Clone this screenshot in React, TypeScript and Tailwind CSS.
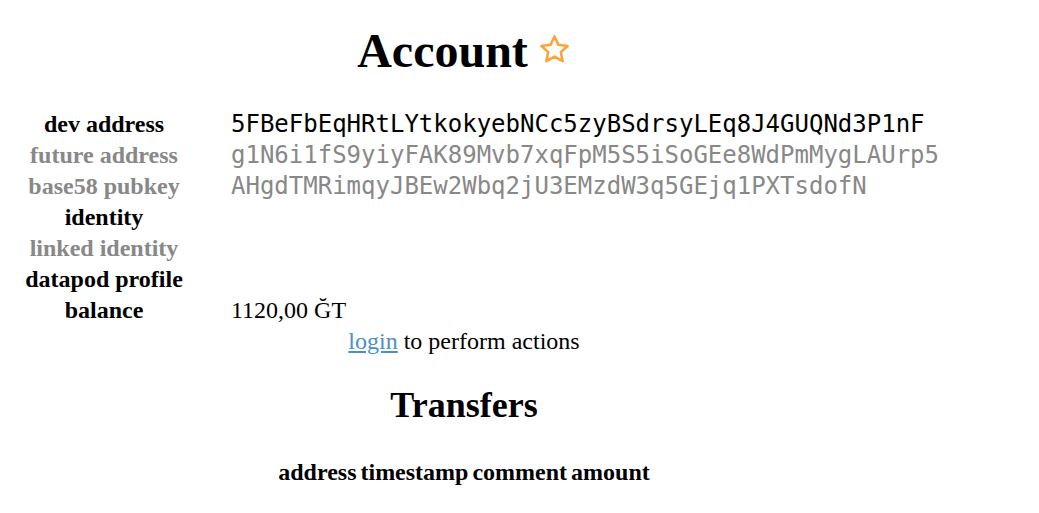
import React from "react";

const rows: { label: string; value?: string; muted?: boolean; mono?: boolean }[] = [
  { label: "dev address", value: "5FBeFbEqHRtLYtkokyebNCc5zyBSdrsyLEq8J4GUQNd3P1nF", mono: true },
  { label: "future address", value: "g1N6i1fS9yiyFAK89Mvb7xqFpM5S5iSoGEe8WdPmMygLAUrp5", muted: true, mono: true },
  { label: "base58 pubkey", value: "AHgdTMRimqyJBEw2Wbq2jU3EMzdW3q5GEjq1PXTsdofN", muted: true, mono: true },
  { label: "identity" },
  { label: "linked identity", muted: true },
  { label: "datapod profile" },
  { label: "balance", value: "1120,00 ĞT" },
];

function Star() {
  return (
    <svg width="33" height="33" viewBox="0 0 24 24" className="inline-block align-[1px] ml-[10px]">
      <polygon
        points="12,2.5 14.9,8.6 21.5,9.4 16.6,13.9 17.9,20.5 12,17.2 6.1,20.5 7.4,13.9 2.5,9.4 9.1,8.6"
        fill="none"
        stroke="#fba43c"
        strokeWidth="1.9"
        strokeLinejoin="round"
      />
    </svg>
  );
}

export default function App() {
  return (
    <div className="w-[928px] bg-white text-black font-['Liberation_Serif',serif] text-[24px]">
      {/* Header */}
      <h1 className="pt-[23px] text-center text-[48px] font-bold leading-[55px]">
        Account
        <Star />
      </h1>

      {/* Account info */}
      <div className="mt-[31px] pl-[24px] grid grid-cols-[160px_1fr] gap-x-[47px] leading-[31px]">
        {rows.map((r) => (
          <React.Fragment key={r.label}>
            <div className={`text-center font-bold whitespace-nowrap ${r.muted ? "text-[#888888]" : ""}`}>
              {r.label}
            </div>
            <div
              className={`whitespace-nowrap ${r.mono ? "font-['DejaVu_Sans_Mono',monospace]" : ""} ${
                r.muted ? "text-[#888888]" : ""
              }`}
            >
              {r.value ?? ""}
            </div>
          </React.Fragment>
        ))}
      </div>

      <p className="text-center leading-[31px]">
        <a href="#" className="text-[#4a90c8] underline">
          login
        </a>{" "}
        to perform actions
      </p>

      {/* Transfers */}
      <h2 className="mt-[28px] text-center text-[36px] font-bold leading-[41px]">Transfers</h2>

      <div className="mt-[32px] flex justify-center gap-x-[4px] font-bold leading-[28px]">
        <span>address</span>
        <span>timestamp</span>
        <span>comment</span>
        <span>amount</span>
      </div>
    </div>
  );
}
